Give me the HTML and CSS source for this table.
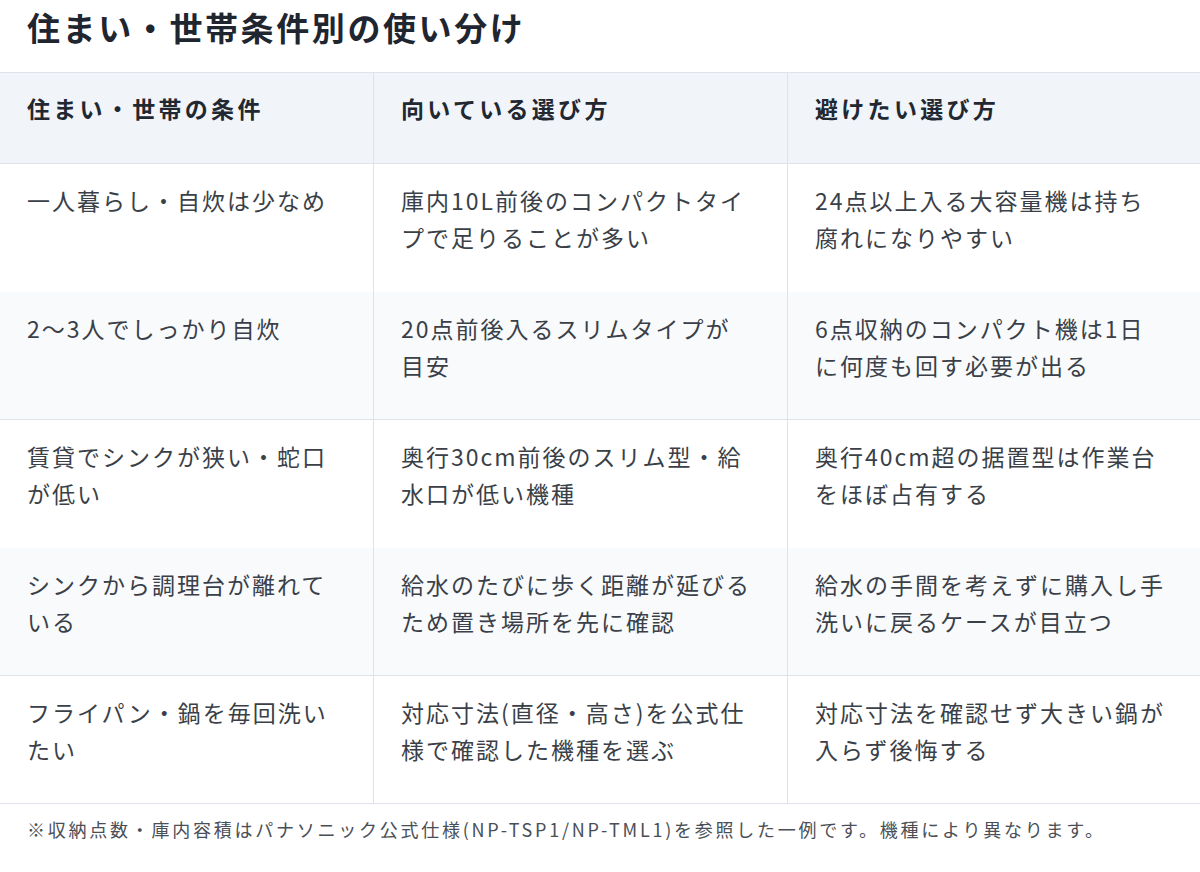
FILE: index.html
```html
<!DOCTYPE html>
<html lang="ja">
<head>
<meta charset="utf-8">
<title>住まい・世帯条件別の使い分け</title>
<link rel="stylesheet" href="styles.css">
</head>
<body>
<h1 class="title">住まい・世帯条件別の使い分け</h1>
<table class="guide">
  <colgroup>
    <col class="c1">
    <col class="c2">
    <col class="c3">
  </colgroup>
  <thead>
    <tr>
      <th>住まい・世帯の条件</th>
      <th>向いている選び方</th>
      <th>避けたい選び方</th>
    </tr>
  </thead>
  <tbody>
    <tr>
      <td>一人暮らし・自炊は少なめ</td>
      <td>庫内10L前後のコンパクトタイプで足りることが多い</td>
      <td>24点以上入る大容量機は持ち腐れになりやすい</td>
    </tr>
    <tr class="alt">
      <td>2〜3人でしっかり自炊</td>
      <td>20点前後入るスリムタイプが目安</td>
      <td>6点収納のコンパクト機は1日に何度も回す必要が出る</td>
    </tr>
    <tr>
      <td>賃貸でシンクが狭い・蛇口が低い</td>
      <td>奥行30cm前後のスリム型・給水口が低い機種</td>
      <td>奥行40cm超の据置型は作業台をほぼ占有する</td>
    </tr>
    <tr class="alt">
      <td>シンクから調理台が離れている</td>
      <td>給水のたびに歩く距離が延びるため置き場所を先に確認</td>
      <td>給水の手間を考えずに購入し手洗いに戻るケースが目立つ</td>
    </tr>
    <tr class="last">
      <td>フライパン・鍋を毎回洗いたい</td>
      <td>対応寸法(直径・高さ)を公式仕様で確認した機種を選ぶ</td>
      <td>対応寸法を確認せず大きい鍋が入らず後悔する</td>
    </tr>
  </tbody>
</table>
<p class="note">※収納点数・庫内容積はパナソニック公式仕様(NP-TSP1/NP-TML1)を参照した一例です。機種により異なります。</p>
</body>
</html>
```

FILE: styles.css
```css
html, body {
  margin: 0;
  padding: 0;
  background: #ffffff;
}

body {
  font-family: "Noto Sans CJK JP", "Noto Sans", sans-serif;
  color: #3a3f48;
}

.title {
  margin: 0;
  padding: 0 27px 18px;
  font-size: 33px;
  line-height: 54px;
  font-weight: 700;
  letter-spacing: 2.6px;
  color: #1f2630;
}

.guide {
  width: 1200px;
  table-layout: fixed;
  border-collapse: separate;
  border-spacing: 0;
}

.c1 { width: 374px; }
.c2 { width: 414px; }
.c3 { width: 412px; }

.guide th,
.guide td {
  text-align: left;
  vertical-align: top;
  padding: 18px 34px 36px 27px;
  font-size: 23px;
  line-height: 37px;
  letter-spacing: 2px;
  border-right: 1px solid #dfe2e8;
}

.guide th:last-child,
.guide td:last-child {
  border-right: none;
}

.guide th {
  background: #f1f4f8;
  font-weight: 700;
  letter-spacing: 3.3px;
  color: #222831;
  border-top: 1px solid #dfe2e8;
  border-bottom: 1px solid #dfe2e8;
  padding-top: 17px;
  padding-bottom: 36px;
}

.guide td {
  font-weight: 400;
}

.guide tr.alt td {
  background: #f8fafc;
  border-bottom: 1px solid #dfe2e8;
  padding-bottom: 35px;
}

.guide tr.last td {
  border-bottom: 1px solid #dfe2e8;
  padding-bottom: 35px;
}

.note {
  margin: 0;
  padding: 11px 27px;
  font-size: 18px;
  line-height: 28px;
  letter-spacing: 2.75px;
  color: #4a4f57;
}
```
